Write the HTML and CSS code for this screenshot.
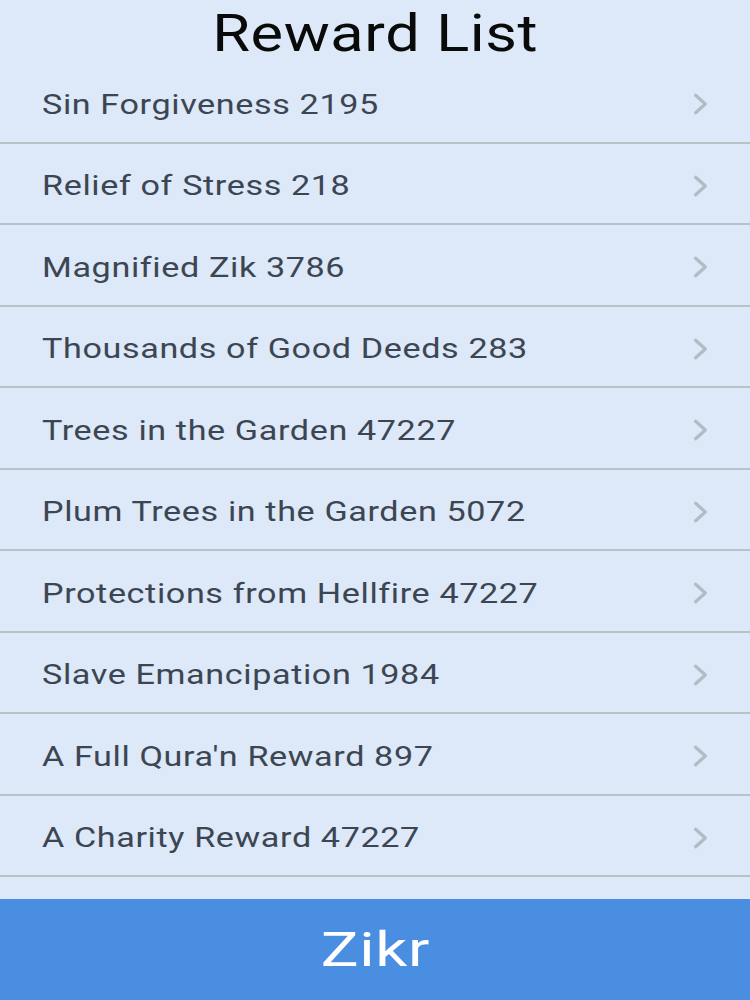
FILE: index.html
```html
<!DOCTYPE html>
<html lang="en">
<head>
    <meta charset="UTF-8">
    <meta name="viewport" content="width=device-width, initial-scale=1.0">
    <title>Reward List</title>
    <link rel="stylesheet" href="styles.css">
</head>
<body>
    <div class="screen">
        <h1 class="title"><span>Reward List</span></h1>

        <ul class="reward-list">
            <li class="reward-item"><span class="label">Sin Forgiveness 2195</span><svg class="chevron" viewBox="0 0 20 24"><path d="M5 4 L14 12 L5 20"/></svg></li>
            <li class="reward-item"><span class="label">Relief of Stress 218</span><svg class="chevron" viewBox="0 0 20 24"><path d="M5 4 L14 12 L5 20"/></svg></li>
            <li class="reward-item"><span class="label">Magnified Zik 3786</span><svg class="chevron" viewBox="0 0 20 24"><path d="M5 4 L14 12 L5 20"/></svg></li>
            <li class="reward-item"><span class="label">Thousands of Good Deeds 283</span><svg class="chevron" viewBox="0 0 20 24"><path d="M5 4 L14 12 L5 20"/></svg></li>
            <li class="reward-item"><span class="label">Trees in the Garden 47227</span><svg class="chevron" viewBox="0 0 20 24"><path d="M5 4 L14 12 L5 20"/></svg></li>
            <li class="reward-item"><span class="label">Plum Trees in the Garden 5072</span><svg class="chevron" viewBox="0 0 20 24"><path d="M5 4 L14 12 L5 20"/></svg></li>
            <li class="reward-item"><span class="label">Protections from Hellfire 47227</span><svg class="chevron" viewBox="0 0 20 24"><path d="M5 4 L14 12 L5 20"/></svg></li>
            <li class="reward-item"><span class="label">Slave Emancipation 1984</span><svg class="chevron" viewBox="0 0 20 24"><path d="M5 4 L14 12 L5 20"/></svg></li>
            <li class="reward-item"><span class="label">A Full Qura'n Reward 897</span><svg class="chevron" viewBox="0 0 20 24"><path d="M5 4 L14 12 L5 20"/></svg></li>
            <li class="reward-item"><span class="label">A Charity Reward 47227</span><svg class="chevron" viewBox="0 0 20 24"><path d="M5 4 L14 12 L5 20"/></svg></li>
            <li class="reward-item"></li>
        </ul>

        <button class="zikr-button"><span>Zikr</span></button>
    </div>
</body>
</html>
```

FILE: styles.css
```css
* {
    box-sizing: border-box;
}

body {
    margin: 0;
    font-family: Roboto, "Noto Sans", sans-serif;
    background-color: #dde8f8;
}

.screen {
    display: flex;
    flex-direction: column;
    height: 100vh;
}

.title {
    margin: 0;
    height: 62px;
    line-height: 68px;
    text-align: center;
    font-size: 52px;
    font-weight: 400;
    letter-spacing: 0.5px;
    color: #0a0a0a;
}

.title span {
    display: inline-block;
    transform: scaleX(1.18);
}

.reward-list {
    flex: 1;
    list-style: none;
    margin: 0;
    padding: 0;
    overflow: hidden;
}

.reward-item {
    display: flex;
    justify-content: space-between;
    align-items: center;
    height: 81.5px;
    padding: 5px 38px 0 42px;
    border-bottom: 2px solid #b9c0c6;
    font-size: 28px;
    letter-spacing: 0.5px;
    color: #3c4653;
}

.label {
    display: inline-block;
    transform: scaleX(1.22);
    transform-origin: left center;
}

.chevron {
    width: 22px;
    height: 26px;
    fill: none;
    stroke: #b3bbc4;
    stroke-width: 3;
    stroke-linecap: round;
    stroke-linejoin: round;
}

.zikr-button {
    height: 101px;
    flex-shrink: 0;
    border: none;
    background-color: #4a8ee1;
    color: #fff;
    font-family: inherit;
    font-size: 49px;
    letter-spacing: 0.5px;
}

.zikr-button span {
    display: inline-block;
    transform: scaleX(1.29);
}
```
